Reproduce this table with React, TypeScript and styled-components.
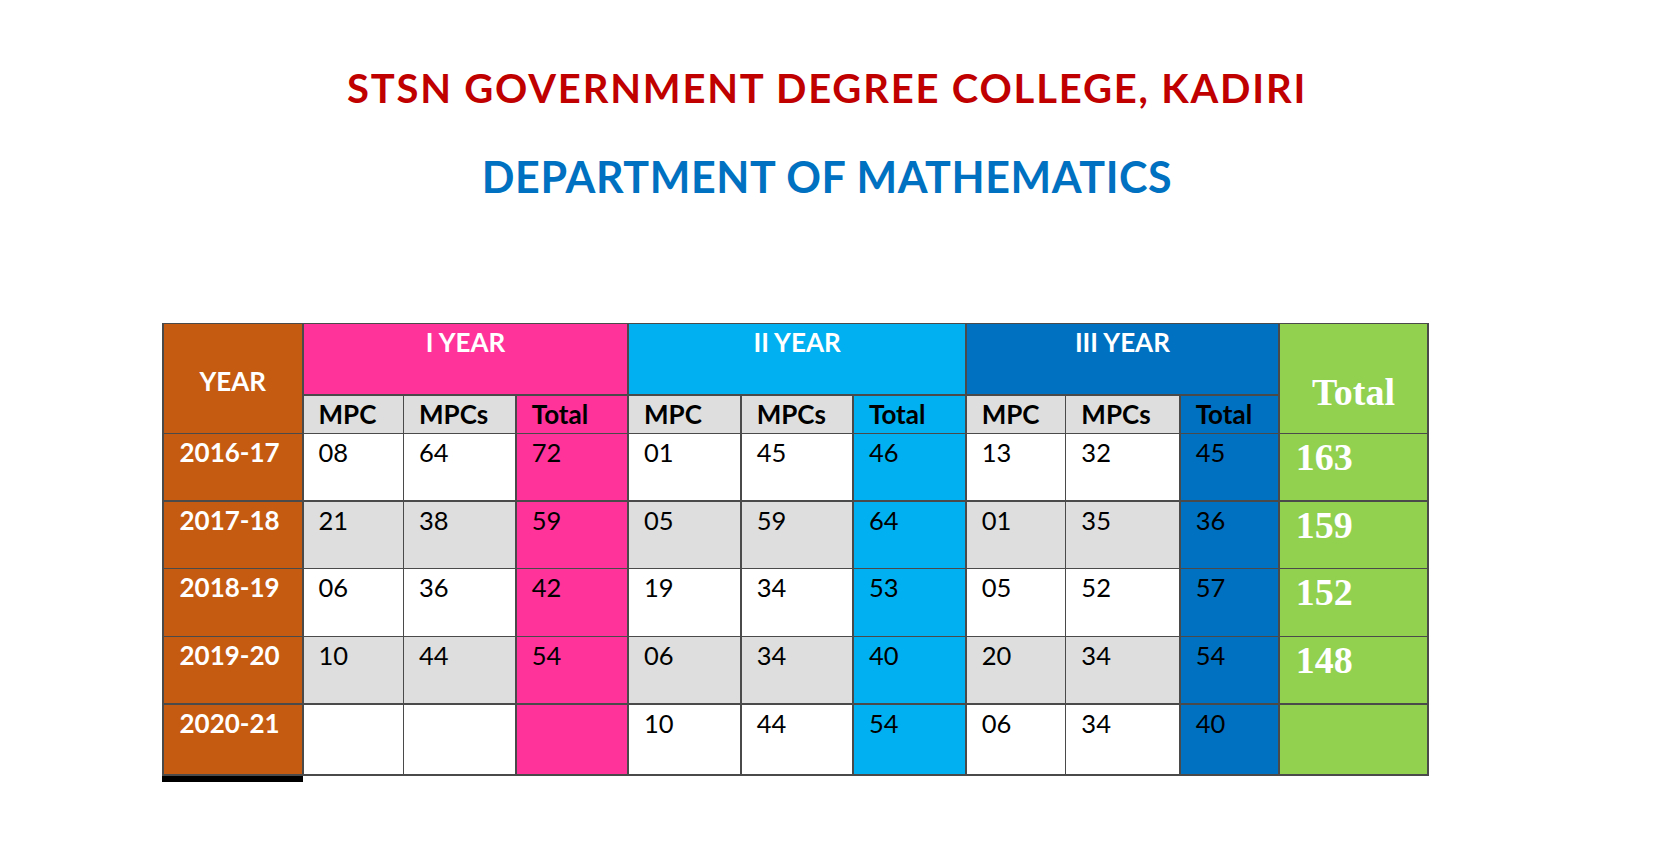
import styled, { createGlobalStyle } from "styled-components";

type Group = [string, string, string];

type YearRow = {
  year: string;
  first: Group;
  second: Group;
  third: Group;
  total: string;
};

const ORANGE = "#c55a11";
const PINK = "#ff3399";
const CYAN = "#00b0f0";
const BLUE = "#0070c0";
const GREEN = "#92d050";
const GREY = "#dedede";

const rows: Array<YearRow> = [
  { year: "2016-17", first: ["08", "64", "72"], second: ["01", "45", "46"], third: ["13", "32", "45"], total: "163" },
  { year: "2017-18", first: ["21", "38", "59"], second: ["05", "59", "64"], third: ["01", "35", "36"], total: "159" },
  { year: "2018-19", first: ["06", "36", "42"], second: ["19", "34", "53"], third: ["05", "52", "57"], total: "152" },
  { year: "2019-20", first: ["10", "44", "54"], second: ["06", "34", "40"], third: ["20", "34", "54"], total: "148" },
  { year: "2020-21", first: ["", "", ""], second: ["10", "44", "54"], third: ["06", "34", "40"], total: "" },
];

const groups = [
  { label: "I YEAR", color: PINK, key: "first" as const },
  { label: "II YEAR", color: CYAN, key: "second" as const },
  { label: "III YEAR", color: BLUE, key: "third" as const },
];

const GlobalStyle = createGlobalStyle`
  body {
    margin: 0;
    background: #ffffff;
    font-family: Lato, "Open Sans", sans-serif;
  }
`;

const App = () => {
  return (
    <Page>
      <GlobalStyle />
      <Titles>
        <Heading $color="#c00000" $size={40} $spacing={1.8}>
          STSN GOVERNMENT DEGREE COLLEGE, KADIRI
        </Heading>
        <Heading $color="#0070c0" $size={43} $spacing={0.6}>
          DEPARTMENT OF MATHEMATICS
        </Heading>
      </Titles>

      <TableWrap>
        <Table>
          <YearHead>YEAR</YearHead>
          {groups.map((g) => (
            <GroupHead key={g.label} $bg={g.color}>
              {g.label}
            </GroupHead>
          ))}
          <GrandHead>Total</GrandHead>

          {groups.map((g) => [
            <SubHead key={g.label + "mpc"} $bg={GREY}>MPC</SubHead>,
            <SubHead key={g.label + "mpcs"} $bg={GREY}>MPCs</SubHead>,
            <SubHead key={g.label + "tot"} $bg={g.color}>Total</SubHead>,
          ])}

          {rows.map((row, index) => {
            const shade = index % 2 === 1 ? GREY : "#ffffff";
            return [
              <YearCell key={row.year}>{row.year}</YearCell>,
              ...groups.map((g) => [
                <DataCell key={row.year + g.label + "a"} $bg={shade}>{row[g.key][0]}</DataCell>,
                <DataCell key={row.year + g.label + "b"} $bg={shade}>{row[g.key][1]}</DataCell>,
                <DataCell key={row.year + g.label + "c"} $bg={g.color}>{row[g.key][2]}</DataCell>,
              ]),
              <GrandCell key={row.year + "total"}>{row.total}</GrandCell>,
            ];
          })}
        </Table>
        <BaseBar />
      </TableWrap>
    </Page>
  );
};

export default App;

const Page = styled.div`
  width: 1669px;
  min-height: 854px;
  padding-top: 64px;
  box-sizing: border-box;
`;

const Titles = styled.div`
  display: flex;
  flex-direction: column;
  align-items: center;
  gap: 39px;
  padding-right: 15px;
`;

const Heading = styled.h1<{ $color: string; $size: number; $spacing: number }>`
  margin: 0;
  color: ${({ $color }) => $color};
  font-family: Lato, sans-serif;
  font-weight: 700;
  font-size: ${({ $size }) => $size}px;
  line-height: 1.2;
  letter-spacing: ${({ $spacing }) => $spacing}px;
`;

const TableWrap = styled.div`
  margin-top: 120px;
  margin-left: 162px;
`;

const Table = styled.div`
  display: grid;
  grid-template-columns: 138.5px 99px 111.2px 110.8px 111.2px 110.8px 111.2px 98.2px 112.8px 97.5px 147.8px;
  grid-template-rows: 70.1px 36.9px 66.2px 66.2px 66.2px 66.2px 69.3px;
  gap: 1.5px;
  padding: 1.5px;
  width: max-content;
  background: #4a4a4a;
`;

const Cell = styled.div<{ $bg?: string }>`
  background: ${({ $bg }) => $bg ?? "#ffffff"};
  font-family: Lato, sans-serif;
  font-size: 26px;
  line-height: 31px;
  color: #000000;
`;

const YearHead = styled(Cell)`
  grid-row: span 2;
  background: ${ORANGE};
  color: #ffffff;
  font-weight: 700;
  display: flex;
  align-items: center;
  justify-content: center;
  padding-top: 6px;
`;

const GroupHead = styled(Cell)`
  grid-column: span 3;
  color: #ffffff;
  font-weight: 700;
  text-align: center;
  padding-top: 3px;
`;

const GrandHead = styled(Cell)`
  grid-row: span 2;
  background: ${GREEN};
  color: #ffffff;
  font-family: "Liberation Serif", "Times New Roman", serif;
  font-weight: 700;
  font-size: 38px;
  line-height: 46px;
  text-align: center;
  padding-top: 45px;
  box-sizing: border-box;
`;

const SubHead = styled(Cell)`
  font-weight: 700;
  padding: 3px 0 0 15px;
`;

const YearCell = styled(Cell)`
  background: ${ORANGE};
  color: #ffffff;
  font-weight: 700;
  padding: 3px 0 0 16px;
`;

const DataCell = styled(Cell)`
  font-size: 25.5px;
  padding: 3px 0 0 15px;
`;

const GrandCell = styled(Cell)`
  background: ${GREEN};
  color: #ffffff;
  font-family: "Liberation Serif", "Times New Roman", serif;
  font-weight: 700;
  font-size: 38px;
  line-height: 46px;
  padding: 0 0 0 16px;
`;

const BaseBar = styled.div`
  width: 141px;
  height: 6px;
  background: #000000;
`;
